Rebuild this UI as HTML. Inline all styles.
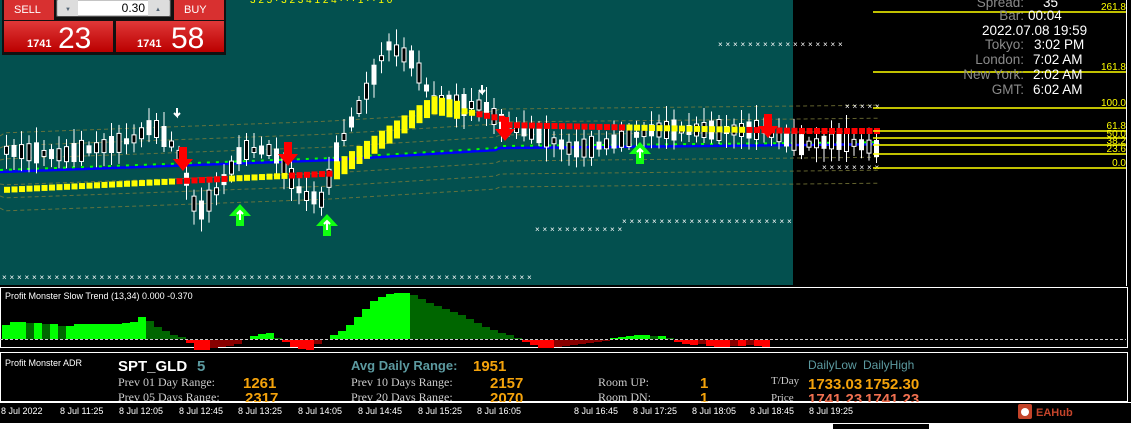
<!DOCTYPE html>
<html><head><meta charset="utf-8"><style>
*{margin:0;padding:0;box-sizing:border-box}
body{width:1131px;height:429px;background:#000;overflow:hidden;position:relative;font-family:"Liberation Sans",sans-serif}
.a{position:absolute}
</style></head><body>
<svg class="a" style="left:0;top:0" width="1131" height="429" id="s">
<rect x="0" y="0" width="1131" height="429" fill="#000"/>
<rect x="0" y="0" width="793" height="285" fill="#03504f"/>
<rect x="0.5" y="287.5" width="1127" height="60" fill="none" stroke="#fff"/>
<rect x="0.5" y="352.5" width="1127" height="49" fill="none" stroke="#fff"/>
<line x1="0" y1="402.5" x2="1131" y2="402.5" stroke="#fff"/>
<rect x="0" y="422" width="1131" height="7" fill="#fff"/>
<line x1="0" y1="422.5" x2="1131" y2="422.5" stroke="#000"/>
<rect x="833" y="424" width="96" height="5" fill="#000"/>
<g id="g"></g>
<g stroke="#ff0" stroke-width="1.5">
<line x1="873" y1="12" x2="1126" y2="12"/><line x1="873" y1="72" x2="1126" y2="72"/>
<line x1="873" y1="108" x2="1126" y2="108"/><line x1="873" y1="131" x2="1126" y2="131"/>
<line x1="873" y1="138" x2="1126" y2="138"/><line x1="873" y1="145" x2="1126" y2="145"/>
<line x1="873" y1="154" x2="1126" y2="154"/><line x1="873" y1="168" x2="1126" y2="168"/>
</g>
<g fill="#ff0" font-size="10" text-anchor="end" font-family="Liberation Sans">
<text x="1126" y="10">261.8</text><text x="1126" y="70">161.8</text><text x="1126" y="106">100.0</text>
<text x="1126" y="129">61.8</text><text x="1126" y="137">50.0</text><text x="1126" y="144">38.2</text>
<text x="1126" y="152">23.6</text><text x="1126" y="166">0.0</text>
</g>
<g fill="#8a8a8a" font-size="13.5" text-anchor="end" font-family="Liberation Sans">
<text x="1024" y="7">Spread:</text><text x="1024" y="20">Bar:</text><text x="1024" y="49">Tokyo:</text>
<text x="1024" y="64">London:</text><text x="1024" y="79">New York:</text><text x="1024" y="94">GMT:</text>
</g>
<g fill="#fff" font-size="13.5" font-family="Liberation Sans">
<text x="1043" y="7">35</text><text x="1028" y="20">00:04</text><text x="982" y="35">2022.07.08 19:59</text>
<text x="1034" y="49">3:02 PM</text><text x="1033" y="64">7:02 AM</text><text x="1033" y="79">2:02 AM</text><text x="1033" y="94">6:02 AM</text>
</g>
<line x1="1126.5" y1="0" x2="1126.5" y2="286" stroke="#fff"/>
<text x="5" y="299" fill="#fff" font-size="9">Profit Monster Slow Trend (13,34) 0.000 -0.370</text>
<line x1="0" y1="339.5" x2="1126" y2="339.5" stroke="#ccc" stroke-dasharray="3,2"/>
<text x="5" y="366" fill="#fff" font-size="9">Profit Monster ADR</text>
<text x="118" y="371" fill="#fff" font-size="15" font-weight="bold">SPT_GLD</text>
<text x="197" y="371" fill="#5c9aa0" font-size="15" font-weight="bold">5</text>
<text x="351" y="370" fill="#5c9aa0" font-size="13" font-weight="bold">Avg Daily Range:</text>
<text x="473" y="371" fill="#f5a30b" font-size="15" font-weight="bold">1951</text>
<g fill="#ccc" font-size="12" font-family="Liberation Serif">
<text x="118" y="386">Prev 01 Day Range:</text><text x="118" y="401">Prev 05 Days Range:</text>
<text x="351" y="386">Prev 10 Days Range:</text><text x="351" y="401">Prev 20 Days Range:</text>
<text x="598" y="386">Room UP:</text><text x="598" y="401">Room DN:</text>
<text x="771" y="384" font-size="11">T/Day</text><text x="771" y="401" font-size="11">Price</text>
</g>
<g fill="#f5a30b" font-size="15" font-weight="bold">
<text x="243" y="388">1261</text><text x="245" y="403">2317</text>
<text x="490" y="388">2157</text><text x="490" y="403">2070</text>
<text x="700" y="388">1</text><text x="700" y="403">1</text>
<text x="808" y="389">1733.03</text><text x="865" y="389">1752.30</text>
</g>
<g fill="#f07050" font-size="15" font-weight="bold"><text x="808" y="404">1741.23</text><text x="865" y="404">1741.23</text></g>
<text x="808" y="369" fill="#5c9aa0" font-size="12">DailyLow</text>
<text x="863" y="369" fill="#5c9aa0" font-size="12">DailyHigh</text>
<rect x="0" y="402" width="1131" height="19" fill="#000"/>
<line x1="0" y1="402.5" x2="1131" y2="402.5" stroke="#fff"/>
<g fill="#fff" font-size="9" font-family="Liberation Sans">
<text x="1" y="414">8 Jul 2022</text><text x="60" y="414">8 Jul 11:25</text><text x="119" y="414">8 Jul 12:05</text>
<text x="179" y="414">8 Jul 12:45</text><text x="238" y="414">8 Jul 13:25</text><text x="298" y="414">8 Jul 14:05</text>
<text x="358" y="414">8 Jul 14:45</text><text x="418" y="414">8 Jul 15:25</text><text x="477" y="414">8 Jul 16:05</text>
<text x="574" y="414">8 Jul 16:45</text><text x="633" y="414">8 Jul 17:25</text><text x="692" y="414">8 Jul 18:05</text>
<text x="750" y="414">8 Jul 18:45</text><text x="809" y="414">8 Jul 19:25</text>
</g>
<rect x="1018" y="404" width="14" height="15" fill="#c4442a" rx="2"/>
<circle cx="1025" cy="412" r="4" fill="#fff"/>
<text x="1036" y="416" fill="#c4442a" font-size="11" font-weight="bold">EAHub</text>
<rect x="2" y="0" width="224" height="55" fill="#111"/>
<rect x="4" y="0" width="50" height="20" fill="#d83030"/>
<rect x="174" y="0" width="50" height="20" fill="#d83030"/>
<text x="14" y="13" fill="#fff" font-size="11">SELL</text>
<text x="184" y="13" fill="#fff" font-size="11">BUY</text>
<rect x="57" y="0" width="113" height="16" fill="#fff" stroke="#888"/>
<rect x="58" y="0" width="20" height="16" fill="#ddd"/><rect x="148" y="0" width="21" height="16" fill="#ddd"/>
<text x="145" y="12" fill="#000" font-size="12" text-anchor="end">0.30</text>
<text x="68" y="11" fill="#567" font-size="6" text-anchor="middle">▼</text><text x="158" y="11" fill="#567" font-size="6" text-anchor="middle">▲</text>
<defs><linearGradient id="rd" x1="0" y1="0" x2="0" y2="1"><stop offset="0" stop-color="#e03838"/><stop offset="1" stop-color="#b00"/></linearGradient></defs>
<rect x="4" y="21" width="109" height="31" fill="url(#rd)"/><rect x="116" y="21" width="108" height="31" fill="url(#rd)"/>
<text x="27" y="47" fill="#fff" font-size="11" font-weight="bold">1741</text>
<text x="58" y="48" fill="#fff" font-size="30">23</text>
<text x="137" y="47" fill="#fff" font-size="11" font-weight="bold">1741</text>
<text x="171" y="48" fill="#fff" font-size="30">58</text>
<text x="250" y="3" fill="#ff0" font-size="10">3 2 5 · 3 2 3 4 1 2 4 · · · 1 · · 1 0</text>
</svg>
<script>
(function(){
var g=document.getElementById('g'),h='';
function R(x,y,w,hh,c){h+='<rect x="'+x+'" y="'+y+'" width="'+w+'" height="'+hh+'" fill="'+c+'"/>';}
var P=[[0,150],[60,155],[130,140],[150,125],[175,150],[195,215],[215,190],[240,150],[270,150],[300,195],[320,200],[335,150],[360,100],[385,45],[410,60],[430,100],[460,105],[480,105],[500,125],[540,135],[570,150],[600,145],[650,130],[700,130],[760,130],[800,145],[840,140],[880,150]];
function Y(x){for(var i=0;i<P.length-1;i++){if(x<=P[i+1][0]){var t=(x-P[i][0])/(P[i+1][0]-P[i][0]);return P[i][1]+t*(P[i+1][1]-P[i][1]);}}return 150;}
function tr(x){return x<330?190-x*0.05:(x<430?173-(x-330)*0.68:(x<500?105+(x-430)*0.2:(x<800?125+(x-500)*0.02:131)));}
function bl(x){return x<330?172-x*0.036:(x<500?160-(x-330)*0.06:148-(x-500)*0.01);}
for(var k=-3;k<=3;k++){if(k==0)continue;var d='M0 '+(bl(0)+k*12);for(var x=5;x<=880;x+=5)d+=' L'+x+' '+(bl(x)+k*13);h+='<path d="'+d+'" fill="none" stroke="#7a7a3a" stroke-width="1" stroke-dasharray="4,3" opacity="0.8"/>';}
var d='M0 '+bl(0);for(var x=5;x<=880;x+=5)d+=' L'+x+' '+bl(x);h+='<path d="'+d+'" fill="none" stroke="#00f" stroke-width="2.5"/>';
h+='<path d="'+d+'" fill="none" stroke="#0f0" stroke-width="2" stroke-dasharray="3,6" transform="translate(0,-2)"/>';
for(var x=4;x<880;x+=7.5){var i=Math.round(x/7.5);var c=Y(x);var sz=6+((i*37)%17);var up=((i*13)%5)<2;var tp=c-sz/2-4-((i*7)%12),bt=c+sz/2+3+((i*11)%12);
h+='<line x1="'+(x+2.5)+'" y1="'+tp+'" x2="'+(x+2.5)+'" y2="'+bt+'" stroke="#fff"/>';
R(x,c-sz/2,5,sz,'#fff');if(!up)R(x+1,c-sz/2+1,3,sz-2,'#000');
var t=tr(x);var col=(x>170&&x<330&&(x<225||x>285))||(x>470&&x<620)||(x>740&&x<890)?'#f00':'#ff0';
var big=(col=='#ff0'&&x>300&&x<460);
R(x,t-(big?9:3),6,(big?18:6),col);}
function X(x0,x1,y){for(var x=x0;x<=x1;x+=7.5)h+='<text x="'+x+'" y="'+y+'" fill="#fff" font-size="8">×</text>';}
X(2,530,280);X(535,620,232);X(622,790,224);X(718,842,47);X(845,880,109);X(822,880,170);
function dn(x,y){h+='<path d="M'+(x-4)+' '+(y-18)+'h8v12h6l-10 12-10-12h6z" fill="#f00"/>';}
function upA(x,y){h+='<path d="M'+(x-4)+' '+(y+14)+'v-10h-7l11-12 11 12h-7v10z" fill="#1f1"/><path d="M'+x+' '+(y+8)+'v-8M'+(x-3)+' '+(y+2)+'l3-3 3 3" stroke="#fff" stroke-width="2" fill="none"/>';}
dn(183,165);dn(288,160);dn(505,135);dn(768,132);upA(240,212);upA(327,222);upA(640,150);
h+='<path d="M177 108v8l-3-3M177 116l3-3" stroke="#fff" stroke-width="2" fill="none"/><path d="M482 85v8l-3-3M482 93l3-3" stroke="#fff" stroke-width="2" fill="none"/>';
var H=[14,17,17,16,16,15,15,13,13,15,15,15,15,15,15,16,17,22,18,12,8,4,2,-3,-10,-10,-8,-7,-6,-4,0,3,5,6,1,-2,-7,-9,-10,-4,0,4,8,14,22,30,38,42,45,46,46,44,40,36,33,30,27,24,20,16,12,9,6,4,1,-2,-5,-8,-8,-7,-6,-5,-4,-3,-2,-1,1,2,3,4,4,3,3,1,-2,-4,-5,-4,-6,-7,-7,-6,-6,-5,-6,-7];
var bw=8;for(var i=0;i<H.length;i++){var v=H[i],x=i*bw+2;if(x>880)break;var pv=i?H[i-1]:0;var c=v>=0?(v>=pv?'#0f0':'#060'):(v<=pv?'#f00':'#800');if(v>=0)R(x,339-v,bw,v,c);else R(x,340,bw,-v,c);}
g.innerHTML=h;
})();
</script>
</body></html>
